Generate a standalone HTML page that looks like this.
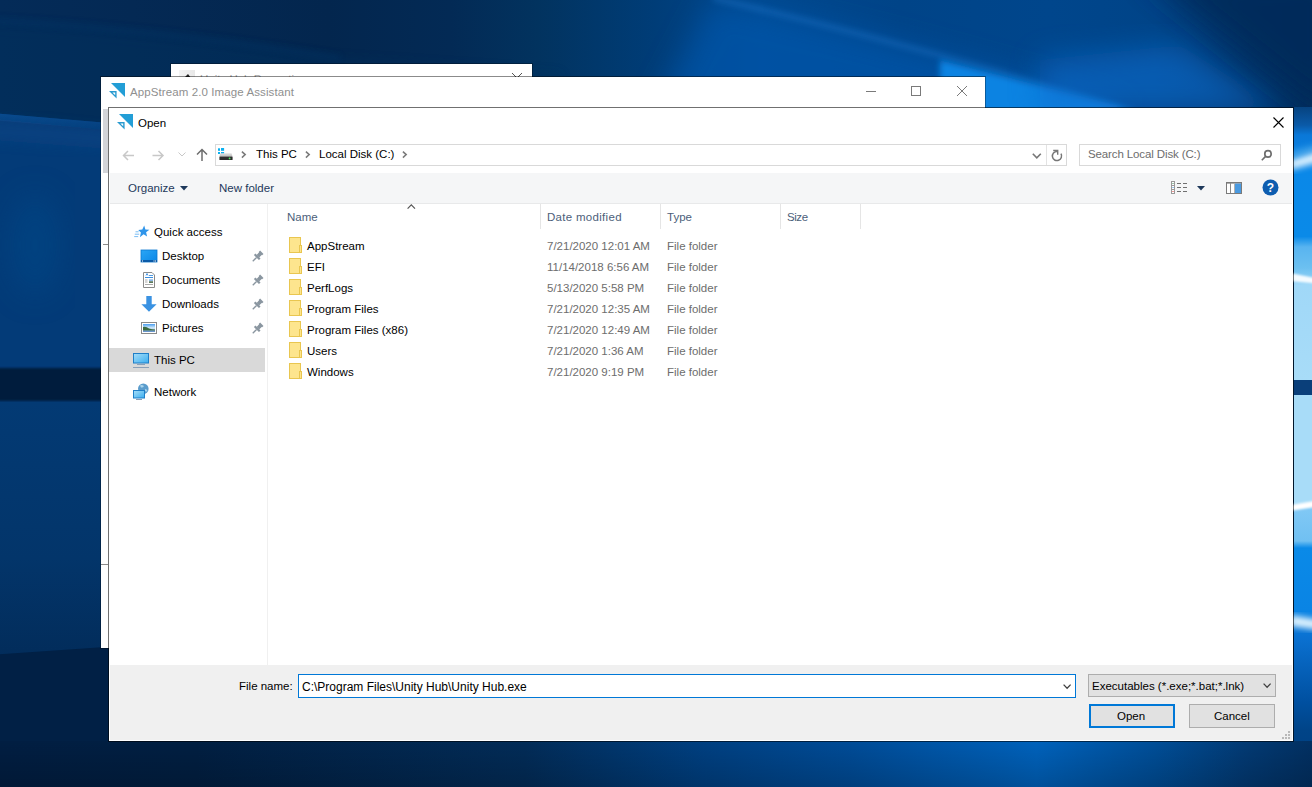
<!DOCTYPE html>
<html><head><meta charset="utf-8">
<style>
*{box-sizing:border-box;margin:0;padding:0}
html,body{width:1312px;height:787px;overflow:hidden}
body{position:relative;font-family:"Liberation Sans",sans-serif;font-size:11.5px;color:#000;background:#03306a}
.a{position:absolute}
#bg{position:absolute;left:0;top:0;width:1312px;height:787px;overflow:hidden}
#bg div{position:absolute}
.t{position:absolute;white-space:pre;line-height:14px;height:14px;margin-top:-1px}
svg{position:absolute;overflow:visible}
</style></head><body>
<div id="bg">
<svg width="1312" height="787" viewBox="0 0 1312 787" style="left:0;top:0">
  <defs>
    <filter id="b6" x="-20%" y="-20%" width="140%" height="140%"><feGaussianBlur stdDeviation="6"/></filter>
    <filter id="b3" x="-20%" y="-20%" width="140%" height="140%"><feGaussianBlur stdDeviation="3"/></filter>
    <filter id="b15" x="-30%" y="-30%" width="160%" height="160%"><feGaussianBlur stdDeviation="15"/></filter>
    <filter id="b1" x="-20%" y="-20%" width="140%" height="140%"><feGaussianBlur stdDeviation="1.2"/></filter>
    <linearGradient id="gTop" x1="0" y1="0" x2="1312" y2="0" gradientUnits="userSpaceOnUse">
      <stop offset="0" stop-color="#042b58"/>
      <stop offset="0.1" stop-color="#042954"/>
      <stop offset="0.25" stop-color="#03264e"/>
      <stop offset="0.343" stop-color="#032a55"/>
      <stop offset="0.41" stop-color="#02335f"/>
      <stop offset="0.5" stop-color="#003d78"/>
      <stop offset="0.58" stop-color="#00488e"/>
      <stop offset="0.686" stop-color="#004488"/>
      <stop offset="0.8" stop-color="#00468c"/>
      <stop offset="0.88" stop-color="#004488"/>
      <stop offset="1" stop-color="#022d5c"/>
    </linearGradient>
    <linearGradient id="gBot" x1="0" y1="0" x2="1312" y2="0" gradientUnits="userSpaceOnUse">
      <stop offset="0" stop-color="#011e42"/>
      <stop offset="0.15" stop-color="#011f42"/>
      <stop offset="0.4" stop-color="#022c58"/>
      <stop offset="0.53" stop-color="#003f80"/>
      <stop offset="0.65" stop-color="#004c98"/>
      <stop offset="0.79" stop-color="#0062bc"/>
      <stop offset="0.88" stop-color="#004e98"/>
      <stop offset="0.95" stop-color="#023a74"/>
      <stop offset="1" stop-color="#023062"/>
    </linearGradient>
    <linearGradient id="gBotV" x1="0" y1="0" x2="0" y2="1">
      <stop offset="0" stop-color="#000" stop-opacity="0"/>
      <stop offset="1" stop-color="#000" stop-opacity="0.18"/>
    </linearGradient>
  <linearGradient id="gR" x1="0" y1="100" x2="0" y2="800" gradientUnits="userSpaceOnUse">
      <stop offset="0" stop-color="#053a70"/>
      <stop offset="0.036" stop-color="#0a5aa8"/>
      <stop offset="0.05" stop-color="#0a78d8"/>
      <stop offset="0.1" stop-color="#0a88e8"/>
      <stop offset="0.195" stop-color="#0a8ae8"/>
      <stop offset="0.21" stop-color="#58b4f0"/>
      <stop offset="0.24" stop-color="#6cc0f0"/>
      <stop offset="0.265" stop-color="#a0d8f8"/>
      <stop offset="0.4" stop-color="#a8dcf8"/>
      <stop offset="0.4" stop-color="#0a3f7a"/>
      <stop offset="0.4214" stop-color="#0a3f7a"/>
      <stop offset="0.4214" stop-color="#a8dcf8"/>
      <stop offset="0.575" stop-color="#a8dcf8"/>
      <stop offset="0.585" stop-color="#80c8f5"/>
      <stop offset="0.63" stop-color="#70c0f2"/>
      <stop offset="0.64" stop-color="#0a8ae8"/>
      <stop offset="0.73" stop-color="#0a84e4"/>
      <stop offset="0.77" stop-color="#0a70d0"/>
      <stop offset="0.86" stop-color="#0050a0"/>
      <stop offset="0.9" stop-color="#004488"/>
      <stop offset="1" stop-color="#003a78"/>
    </linearGradient>
  <linearGradient id="gCurve" x1="0" y1="0" x2="0" y2="1">
      <stop offset="0" stop-color="#0b4c90"/>
      <stop offset="1" stop-color="#053d7a"/>
    </linearGradient>
  <linearGradient id="gL2" x1="0" y1="402" x2="0" y2="662" gradientUnits="userSpaceOnUse">
      <stop offset="0" stop-color="#033a74"/>
      <stop offset="0.6" stop-color="#03356a"/>
      <stop offset="1" stop-color="#022c5a"/>
    </linearGradient>
  </defs>
  <rect x="0" y="0" width="1312" height="787" fill="url(#gTop)"/>
  <!-- top-left subtle lighter region below curve -->
  <path d="M-20 22 Q150 30 340 60 L560 75 L560 140 L-20 140Z" fill="#04305e" opacity="0.45" filter="url(#b6)"/>
  <path d="M-20 20 Q150 28 340 58" fill="none" stroke="#0a3a70" stroke-width="3" opacity="0.5" filter="url(#b3)"/>
  <!-- beam: bright region below diagonal -->
  <path d="M713 0 Q900 40 1120 107 L1120 140 L640 140 Z" fill="#0056ac" opacity="0.7" filter="url(#b15)"/>
  <path d="M713 -2 Q850 30 1000 72 L1120 108" fill="none" stroke="#2a84dc" stroke-width="4" opacity="0.45" filter="url(#b3)"/>
  <path d="M940 60 L1135 110 L940 120Z" fill="#0a86e6" opacity="0.95" filter="url(#b3)"/>
  <path d="M1040 60 L1180 45 L1285 112 L1040 112Z" fill="#0a6ccc" opacity="0.6" filter="url(#b15)"/>
  <!-- top right dark corner -->
  <path d="M1140 -30 L1340 -30 L1340 112 L1320 112 Z" fill="#022c5a" opacity="0.9" filter="url(#b15)"/>

  <!-- left strip -->
  <path d="M-10 113 L120 124 L120 800 L-10 800Z" fill="#033a76"/>
  <path d="M-10 113 L120 124 L120 131 L-10 120Z" fill="url(#gCurve)"/>
  <rect x="-10" y="131" width="130" height="236" fill="#033b78"/>
  <path d="M-10 118 L120 131 L120 150 L-10 140Z" fill="#084484" opacity="0.6" filter="url(#b6)"/>
  <ellipse cx="35" cy="245" rx="25" ry="50" fill="#044686" opacity="0.6" filter="url(#b15)"/>
  <rect x="-10" y="368" width="130" height="33" fill="#021c3e" filter="url(#b1)"/>
  <rect x="-10" y="402" width="130" height="260" fill="url(#gL2)"/>
  <path d="M-10 655 L120 646 L120 800 L-10 800Z" fill="#012045"/>
  

  <!-- right strip -->
  <rect x="1294" y="107" width="30" height="700" fill="url(#gR)"/>
  <path d="M1290 160 L1320 150 L1320 162 L1290 170Z" fill="#d8f0ff" filter="url(#b3)"/>
  <path d="M1290 152 L1320 144 L1320 150 L1290 158Z" fill="#60b8f0" opacity="0.6" filter="url(#b3)"/>
  <path d="M1290 273 L1320 279 L1320 284 L1290 281Z" fill="#f4fbff" filter="url(#b1)"/>
  <path d="M1290 505 L1320 500 L1320 506 L1290 511Z" fill="#ffffff" filter="url(#b1)"/>
  <path d="M1290 615 L1320 620 L1320 630 L1290 626Z" fill="#e0f4ff" filter="url(#b3)"/>

  <!-- bottom band -->
  <rect x="0" y="741" width="1312" height="60" fill="url(#gBot)"/>
  <rect x="0" y="741" width="1312" height="46" fill="url(#gBotV)"/>
</svg>
</div>

<!-- Unity Hub Properties window behind -->
<div class="a" style="left:170px;top:63px;width:363px;height:14px;background:#fff;background-clip:padding-box;border:1px solid rgba(0,0,0,0.3);border-bottom:0;overflow:hidden">
  <div class="a" style="left:8px;top:6px;width:16px;height:7px;background:linear-gradient(90deg,#f4f4f4,#e8e8e8)"></div>
  <svg style="left:12px;top:9px" width="10" height="5"><path d="M1 5 L5 1 L8 5Z" fill="#222"/></svg>
  <div class="t" style="left:29px;top:9px;color:#a8a8a8;font-size:11.5px">Unity Hub Properties</div>
  <svg style="left:340px;top:8px" width="12" height="12"><path d="M1 1L11 11M11 1L1 11" stroke="#555" stroke-width="1"/></svg>
</div>

<!-- AppStream window -->
<div class="a" style="left:100px;top:76px;width:886px;height:573px;background:#fff;background-clip:padding-box;border:1px solid rgba(0,0,0,0.3);border-top-color:rgba(0,0,0,0.45)">
  <svg style="left:7px;top:5px" width="18" height="17" viewBox="0 0 18 17">
    <path d="M3 1H17V15Z" fill="#239ed6"/>
    <path d="M1 9H8.6V16.5Z M4.4 10.4H7.2V13.2Z" fill="#2a9bd0" fill-rule="evenodd"/>
  </svg>
  <div class="t" style="left:29px;top:9px;color:#8f8f8f;font-size:11.5px;letter-spacing:0.1px">AppStream 2.0 Image Assistant</div>
  <div class="a" style="left:765px;top:14px;width:10px;height:1px;background:#7a7a7a"></div>
  <div class="a" style="left:810px;top:9px;width:10px;height:10px;border:1px solid #7a7a7a"></div>
  <svg style="left:856px;top:9px" width="10" height="10"><path d="M0 0L10 10M10 0L0 10" stroke="#7a7a7a" stroke-width="1"/></svg>
  <div class="a" style="left:2px;top:32px;width:5px;height:64px;background:#d3d4d8"></div>
  <div class="a" style="left:2px;top:167px;width:5px;height:1px;background:#8a8a8a"></div>
  <div class="a" style="left:0px;top:487px;width:7px;height:1px;background:#8a8a8a"></div>
</div>

<!-- Open dialog -->
<div class="a" id="dlg" style="left:108px;top:107px;width:1186px;height:635px;background:#fff;background-clip:padding-box;border:1px solid rgba(0,0,0,0.56)">
  <!-- title -->
  <svg style="left:7px;top:5px" width="18" height="17" viewBox="0 0 18 17">
    <path d="M3 1H17V15Z" fill="#239ed6"/>
    <path d="M1 9H8.6V16.5Z M4.4 10.4H7.2V13.2Z" fill="#2a9bd0" fill-rule="evenodd"/>
  </svg>
  <div class="t" style="left:29px;top:9px">Open</div>
  <svg style="left:1164px;top:9px" width="11" height="11"><path d="M0.5 0.5L10.5 10.5M10.5 0.5L0.5 10.5" stroke="#000" stroke-width="1.1"/></svg>

  <!-- nav row -->
  <svg style="left:13px;top:42px" width="13" height="11" viewBox="0 0 13 11"><path d="M12 5.5H1.5M6 1L1.5 5.5L6 10" fill="none" stroke="#c8c8c8" stroke-width="1.5"/></svg>
  <svg style="left:43px;top:42px" width="13" height="11" viewBox="0 0 13 11"><path d="M0.5 5.5H11M6.5 1L11 5.5L6.5 10" fill="none" stroke="#c8c8c8" stroke-width="1.5"/></svg>
  <svg style="left:69px;top:44px" width="8" height="5" viewBox="0 0 8 5"><path d="M0.5 0.5L4 4L7.5 0.5" fill="none" stroke="#c8c8c8" stroke-width="1"/></svg>
  <svg style="left:87px;top:40px" width="12" height="13" viewBox="0 0 12 13"><path d="M6 13V1.5M1 6.5L6 1.5L11 6.5" fill="none" stroke="#6d6d6d" stroke-width="1.5"/></svg>

  <div class="a" style="left:106px;top:36px;width:852px;height:22px;border:1px solid #d9d9d9"></div>
  <div class="a" style="left:937px;top:37px;width:1px;height:20px;background:#e3e3e3"></div>
  <!-- drive icon -->
  <svg style="left:109px;top:40px" width="16" height="14" viewBox="0 0 16 14">
    <defs><linearGradient id="gDrv" x1="0" y1="0" x2="0" y2="1"><stop offset="0" stop-color="#e4e4e4"/><stop offset="1" stop-color="#bcbcbc"/></linearGradient></defs>
    <rect x="0" y="0.3" width="2" height="2.5" fill="#0ab0f0"/><rect x="3" y="0" width="3.1" height="2.8" fill="#0ab0f0"/>
    <rect x="0" y="4" width="2" height="2" fill="#0ab0f0"/><rect x="3" y="4" width="3.1" height="2.7" fill="#0ab0f0"/>
    <path d="M2.2 5.2H13.6L14.5 8.6H1.4Z" fill="url(#gDrv)"/>
    <rect x="1.4" y="8.5" width="13.2" height="3.6" rx="0.6" fill="#2e2e2e"/>
    <circle cx="11.6" cy="10.4" r="0.9" fill="#4cf060"/>
  </svg>
  <svg style="left:132px;top:43px" width="6" height="8" viewBox="0 0 6 8"><path d="M0.9 0.6L4.2 3.6L0.9 6.6" fill="none" stroke="#7a7a7a" stroke-width="1.5"/></svg>
  <div class="t" style="left:147px;top:40px">This PC</div>
  <svg style="left:196px;top:43px" width="6" height="8" viewBox="0 0 6 8"><path d="M0.9 0.6L4.2 3.6L0.9 6.6" fill="none" stroke="#7a7a7a" stroke-width="1.5"/></svg>
  <div class="t" style="left:210px;top:40px">Local Disk (C:)</div>
  <svg style="left:293px;top:43px" width="6" height="8" viewBox="0 0 6 8"><path d="M0.9 0.6L4.2 3.6L0.9 6.6" fill="none" stroke="#7a7a7a" stroke-width="1.5"/></svg>
  <svg style="left:923px;top:45px" width="10" height="7" viewBox="0 0 10 7"><path d="M0.8 0.8L4.8 4.8L8.8 0.8" fill="none" stroke="#777" stroke-width="1.6"/></svg>
  <svg style="left:941px;top:41px" width="14" height="14" viewBox="0 0 14 14"><path d="M7 2.4A4.6 4.6 0 1 0 10.98 4.7" fill="none" stroke="#777" stroke-width="1.5"/><path d="M3.2 1.5H7.7V5.7" fill="none" stroke="#777" stroke-width="1.4"/></svg>

  <div class="a" style="left:970px;top:36px;width:202px;height:22px;border:1px solid #d9d9d9"></div>
  <div class="t" style="left:979px;top:40px;color:#6d6d6d;letter-spacing:-0.12px">Search Local Disk (C:)</div>
  <svg style="left:1152px;top:41px" width="13" height="13" viewBox="0 0 13 13"><circle cx="7" cy="4.9" r="3.2" fill="none" stroke="#6e6e6e" stroke-width="1.7"/><path d="M4.6 7.4L0.8 11.3" stroke="#6e6e6e" stroke-width="1.6"/></svg>

  <!-- toolbar -->
  <div class="a" style="left:1px;top:65px;width:1182px;height:31px;background:#f5f6f7;border-bottom:1px solid #e8e9ea"></div>
  <div class="t" style="left:19px;top:73.5px;color:#1e395b">Organize</div>
  <svg style="left:71px;top:78px" width="9" height="5" viewBox="0 0 9 5"><path d="M0 0H8L4 4.5Z" fill="#1e395b"/></svg>
  <div class="t" style="left:110px;top:73.5px;color:#1e395b">New folder</div>
  <svg style="left:1062px;top:73px" width="17" height="13" viewBox="0 0 17 13">
    <rect x="0.5" y="0.5" width="3" height="12" fill="#fff" stroke="#9a9a9a" stroke-width="1"/>
    <path d="M0.5 4.5H3.5M0.5 8.5H3.5" stroke="#9a9a9a" stroke-width="1"/>
    <rect x="1.5" y="2" width="1" height="1" fill="#3a8a5a"/><rect x="1.5" y="6" width="1" height="1" fill="#3a8ae0"/><rect x="1.5" y="10" width="1" height="1" fill="#e03030"/>
    <path d="M6 2.5H10M12 2.5H16M6 6.5H10M12 6.5H16M6 10.5H10M12 10.5H16" stroke="#707070" stroke-width="1"/>
  </svg>
  <svg style="left:1088px;top:78px" width="9" height="5" viewBox="0 0 9 5"><path d="M0 0H8L4 4.5Z" fill="#1e395b"/></svg>
  <svg style="left:1117px;top:74px" width="16" height="12" viewBox="0 0 16 12">
    <rect x="0.5" y="0.5" width="15" height="11" fill="#fff" stroke="#7a7a7a" stroke-width="1"/>
    <rect x="0" y="0" width="16" height="1.6" fill="#7a7a7a"/>
    <path d="M4.5 1V11" stroke="#8a8a8a" stroke-width="1"/>
    <rect x="9" y="1.6" width="6" height="9.4" fill="#4a9ae0"/>
    <path d="M8.5 1V11" stroke="#b0b0b0" stroke-width="1"/>
  </svg>
  <svg style="left:1153px;top:71px" width="17" height="17" viewBox="0 0 17 17">
    <circle cx="8.5" cy="8.5" r="8" fill="#0e5db0"/>
    <text x="8.5" y="13" font-family="Liberation Sans" font-weight="bold" font-size="12" fill="#fff" text-anchor="middle">?</text>
  </svg>

  <!-- nav pane -->
  <div class="a" style="left:158px;top:96px;width:1px;height:461px;background:#f0f0f0"></div>
  <svg style="left:25px;top:117px" width="16" height="14" viewBox="0 0 16 14">
    <path d="M10.2 0.6L11.4 4.6L15.4 4.7L12.1 7.2L13.1 11.6L9.6 9.2L5.9 12.2L6.9 7.6L4.2 4.9L8.3 4.6Z" fill="#2f95ea"/>
    <path d="M1.5 6.8H4.6M0.8 9.2H5.2M0.2 11.6H4.2" stroke="#6ab6f2" stroke-width="0.9"/>
  </svg>
  <div class="t" style="left:45px;top:118px">Quick access</div>
  <svg style="left:32px;top:142px" width="16" height="12" viewBox="0 0 16 12">
    <defs><linearGradient id="gDesk" x1="0" y1="0" x2="1" y2="1"><stop offset="0" stop-color="#2aa6f6"/><stop offset="1" stop-color="#0a86e6"/></linearGradient></defs>
    <rect x="0" y="0" width="16" height="12" fill="url(#gDesk)"/>
    <rect x="0" y="0" width="16" height="12" fill="none" stroke="#0a78d0" stroke-width="0.8"/>
    <rect x="0" y="10" width="16" height="2" fill="#0a5aa8"/>
    <rect x="1" y="10.5" width="1" height="1" fill="#fff"/><rect x="12.5" y="10.5" width="1" height="1" fill="#fff"/><rect x="14" y="10.5" width="1" height="1" fill="#fff"/>
  </svg>
  <div class="t" style="left:53px;top:142px">Desktop</div>
  <svg style="left:34px;top:164px" width="13" height="16" viewBox="0 0 13 16">
    <path d="M0.5 0.5H9L11.5 3V15.5H0.5Z" fill="#fff" stroke="#8a8a8a" stroke-width="1"/>
    <path d="M3 3.5L4 1.5L5 3.5M6 3.5H10" stroke="#3a8ee0" stroke-width="0.9" fill="none"/>
    <path d="M2 5.5H10" stroke="#3a8ee0" stroke-width="1"/>
    <path d="M2 8H4.5M2 10H4.5M2 12.5H10" stroke="#a0a0a0" stroke-width="0.9"/>
    <rect x="6" y="7.5" width="4" height="1.2" fill="#5a9ae0"/>
    <rect x="6" y="9.3" width="4" height="1.6" fill="#4a6a4a"/>
  </svg>
  <div class="t" style="left:53px;top:166px">Documents</div>
  <svg style="left:32px;top:188px" width="16" height="16" viewBox="0 0 16 16">
    <path d="M5.3 0H10.7V8.2H15.6L8 15.8L0.4 8.2H5.3Z" fill="#3a92e2"/>
  </svg>
  <div class="t" style="left:53px;top:190px">Downloads</div>
  <svg style="left:32px;top:214px" width="16" height="12" viewBox="0 0 16 12">
    <defs><linearGradient id="gSky" x1="0" y1="0" x2="0" y2="1"><stop offset="0" stop-color="#4a9ef0"/><stop offset="0.5" stop-color="#d8ecf8"/><stop offset="1" stop-color="#5a8ac8"/></linearGradient></defs>
    <rect x="0.5" y="0.5" width="15" height="11" fill="#fff" stroke="#8a8a8a" stroke-width="1"/>
    <rect x="2" y="2" width="12" height="8" fill="url(#gSky)"/>
    <path d="M2 5Q5 4 8 6.5Q11 7.5 14 7.5V8.5H2Z" fill="#3a6a40"/>
  </svg>
  <div class="t" style="left:53px;top:214px">Pictures</div>
  <svg style="left:142px;top:143px" width="12" height="12" viewBox="0 0 12 12"><g transform="rotate(45 6 6)" fill="#8a96a0"><path d="M3.6 -0.8H8.4V1.2L7.8 1.2V4.8H4.2V1.2H3.6Z"/><rect x="2.4" y="4.6" width="7.2" height="2.2"/><rect x="5.35" y="6.6" width="1.3" height="5.4"/></g></svg>
  <svg style="left:142px;top:167px" width="12" height="12" viewBox="0 0 12 12"><g transform="rotate(45 6 6)" fill="#8a96a0"><path d="M3.6 -0.8H8.4V1.2L7.8 1.2V4.8H4.2V1.2H3.6Z"/><rect x="2.4" y="4.6" width="7.2" height="2.2"/><rect x="5.35" y="6.6" width="1.3" height="5.4"/></g></svg>
  <svg style="left:142px;top:191px" width="12" height="12" viewBox="0 0 12 12"><g transform="rotate(45 6 6)" fill="#8a96a0"><path d="M3.6 -0.8H8.4V1.2L7.8 1.2V4.8H4.2V1.2H3.6Z"/><rect x="2.4" y="4.6" width="7.2" height="2.2"/><rect x="5.35" y="6.6" width="1.3" height="5.4"/></g></svg>
  <svg style="left:142px;top:215px" width="12" height="12" viewBox="0 0 12 12"><g transform="rotate(45 6 6)" fill="#8a96a0"><path d="M3.6 -0.8H8.4V1.2L7.8 1.2V4.8H4.2V1.2H3.6Z"/><rect x="2.4" y="4.6" width="7.2" height="2.2"/><rect x="5.35" y="6.6" width="1.3" height="5.4"/></g></svg>

  <div class="a" style="left:0px;top:240px;width:156px;height:24px;background:#d9d9d9"></div>
  <svg style="left:24px;top:245px" width="16" height="15" viewBox="0 0 16 15">
    <defs><linearGradient id="gScr" x1="0" y1="0" x2="1" y2="1"><stop offset="0" stop-color="#a8def8"/><stop offset="1" stop-color="#3aaef0"/></linearGradient></defs>
    <rect x="0.5" y="0.5" width="15" height="9.5" fill="url(#gScr)" stroke="#1f7fc8" stroke-width="1"/>
    <path d="M4 11.5H12" stroke="#8aa0b8" stroke-width="1"/>
    <path d="M0 14.5H16" stroke="#8aa0b8" stroke-width="1"/>
  </svg>
  <div class="t" style="left:45px;top:246px">This PC</div>
  <svg style="left:24px;top:275px" width="17" height="17" viewBox="0 0 17 17">
    <circle cx="10.3" cy="5.8" r="5.3" fill="#5a9ccc"/>
    <path d="M7 2.5Q9 1.5 11 3Q10 5 8 4.5Z M12 6Q14 6 14.5 8Q13 9 12 8Z" fill="#a8d4ec"/>
    <rect x="0.5" y="7.5" width="11" height="7.5" fill="url(#gScr)" stroke="#1f7fc8" stroke-width="1"/>
    <path d="M3 16.5H9" stroke="#8aa0b8" stroke-width="1"/>
  </svg>
  <div class="t" style="left:45px;top:278px">Network</div>

  <!-- column headers -->
  <div class="t" style="left:178px;top:103px;color:#4c607a">Name</div>
  <svg style="left:298px;top:96px" width="9" height="6" viewBox="0 0 9 6"><path d="M0.6 4.6L4.3 0.9L8 4.6" fill="none" stroke="#555" stroke-width="1.2"/></svg>
  <div class="a" style="left:431px;top:96px;width:1px;height:25px;background:#e5e5e5"></div>
  <div class="t" style="left:438px;top:103px;color:#4c607a;letter-spacing:0.3px">Date modified</div>
  <div class="a" style="left:551px;top:96px;width:1px;height:25px;background:#e5e5e5"></div>
  <div class="t" style="left:558px;top:103px;color:#4c607a">Type</div>
  <div class="a" style="left:671px;top:96px;width:1px;height:25px;background:#e5e5e5"></div>
  <div class="t" style="left:678px;top:103px;color:#4c607a;letter-spacing:-0.45px">Size</div>
  <div class="a" style="left:751px;top:96px;width:1px;height:25px;background:#e5e5e5"></div>

  <!-- rows -->
    <svg style="left:180px;top:129px" width="14" height="17" viewBox="0 0 14 17"><rect x="0.5" y="0.5" width="11" height="15" fill="#fde58e" stroke="#e9c650" stroke-width="1"/><rect x="10.5" y="8.5" width="2" height="7" fill="#fde58e" stroke="#e9c650" stroke-width="1"/></svg>
  <div class="t" style="left:198px;top:132px">AppStream</div>
  <div class="t" style="left:438px;top:132px;color:#6d6d6d">7/21/2020 12:01 AM</div>
  <div class="t" style="left:558px;top:132px;color:#6d6d6d">File folder</div>
  <svg style="left:180px;top:150px" width="14" height="17" viewBox="0 0 14 17"><rect x="0.5" y="0.5" width="11" height="15" fill="#fde58e" stroke="#e9c650" stroke-width="1"/><rect x="10.5" y="8.5" width="2" height="7" fill="#fde58e" stroke="#e9c650" stroke-width="1"/></svg>
  <div class="t" style="left:198px;top:153px">EFI</div>
  <div class="t" style="left:438px;top:153px;color:#6d6d6d">11/14/2018 6:56 AM</div>
  <div class="t" style="left:558px;top:153px;color:#6d6d6d">File folder</div>
  <svg style="left:180px;top:171px" width="14" height="17" viewBox="0 0 14 17"><rect x="0.5" y="0.5" width="11" height="15" fill="#fde58e" stroke="#e9c650" stroke-width="1"/><rect x="10.5" y="8.5" width="2" height="7" fill="#fde58e" stroke="#e9c650" stroke-width="1"/></svg>
  <div class="t" style="left:198px;top:174px">PerfLogs</div>
  <div class="t" style="left:438px;top:174px;color:#6d6d6d">5/13/2020 5:58 PM</div>
  <div class="t" style="left:558px;top:174px;color:#6d6d6d">File folder</div>
  <svg style="left:180px;top:192px" width="14" height="17" viewBox="0 0 14 17"><rect x="0.5" y="0.5" width="11" height="15" fill="#fde58e" stroke="#e9c650" stroke-width="1"/><rect x="10.5" y="8.5" width="2" height="7" fill="#fde58e" stroke="#e9c650" stroke-width="1"/></svg>
  <div class="t" style="left:198px;top:195px">Program Files</div>
  <div class="t" style="left:438px;top:195px;color:#6d6d6d">7/21/2020 12:35 AM</div>
  <div class="t" style="left:558px;top:195px;color:#6d6d6d">File folder</div>
  <svg style="left:180px;top:213px" width="14" height="17" viewBox="0 0 14 17"><rect x="0.5" y="0.5" width="11" height="15" fill="#fde58e" stroke="#e9c650" stroke-width="1"/><rect x="10.5" y="8.5" width="2" height="7" fill="#fde58e" stroke="#e9c650" stroke-width="1"/></svg>
  <div class="t" style="left:198px;top:216px">Program Files (x86)</div>
  <div class="t" style="left:438px;top:216px;color:#6d6d6d">7/21/2020 12:49 AM</div>
  <div class="t" style="left:558px;top:216px;color:#6d6d6d">File folder</div>
  <svg style="left:180px;top:234px" width="14" height="17" viewBox="0 0 14 17"><rect x="0.5" y="0.5" width="11" height="15" fill="#fde58e" stroke="#e9c650" stroke-width="1"/><rect x="10.5" y="8.5" width="2" height="7" fill="#fde58e" stroke="#e9c650" stroke-width="1"/></svg>
  <div class="t" style="left:198px;top:237px">Users</div>
  <div class="t" style="left:438px;top:237px;color:#6d6d6d">7/21/2020 1:36 AM</div>
  <div class="t" style="left:558px;top:237px;color:#6d6d6d">File folder</div>
  <svg style="left:180px;top:255px" width="14" height="17" viewBox="0 0 14 17"><rect x="0.5" y="0.5" width="11" height="15" fill="#fde58e" stroke="#e9c650" stroke-width="1"/><rect x="10.5" y="8.5" width="2" height="7" fill="#fde58e" stroke="#e9c650" stroke-width="1"/></svg>
  <div class="t" style="left:198px;top:258px">Windows</div>
  <div class="t" style="left:438px;top:258px;color:#6d6d6d">7/21/2020 9:19 PM</div>
  <div class="t" style="left:558px;top:258px;color:#6d6d6d">File folder</div>


  <!-- bottom panel -->
  <div class="a" style="left:1px;top:557px;width:1182px;height:75px;background:#f0f0f0"></div>
  <div class="t" style="left:130px;top:572px">File name:</div>
  <div class="a" style="left:189px;top:566px;width:778px;height:24px;border:1px solid #0078d7;background:#fff"></div>
  <div class="t" style="left:193px;top:573px;font-size:12px">C:\Program Files\Unity Hub\Unity Hub.exe</div>
  <svg style="left:954px;top:576px" width="9" height="6" viewBox="0 0 9 6"><path d="M0.6 0.6L4.1 4.3L7.6 0.6" fill="none" stroke="#404040" stroke-width="1.25"/></svg>
  <div class="a" style="left:979px;top:566px;width:188px;height:23px;border:1px solid #adadad;background:#e1e1e1"></div>
  <div class="t" style="left:983px;top:572px">Executables (*.exe;*.bat;*.lnk)</div>
  <svg style="left:1154px;top:575px" width="9" height="6" viewBox="0 0 9 6"><path d="M0.6 0.6L4.1 4.3L7.6 0.6" fill="none" stroke="#404040" stroke-width="1.25"/></svg>
  <div class="a" style="left:980px;top:596px;width:86px;height:24px;border:2px solid #0078d7;background:#e1e1e1"></div>
  <div class="t" style="left:1008px;top:602px">Open</div>
  <div class="a" style="left:1080px;top:596px;width:86px;height:24px;border:1px solid #adadad;background:#e1e1e1"></div>
  <div class="t" style="left:1105px;top:602px">Cancel</div>
  <svg style="left:1173px;top:623px" width="9" height="9" viewBox="0 0 9 9"><g fill="#b8b8b8"><rect x="6" y="0" width="2" height="2"/><rect x="3" y="3" width="2" height="2"/><rect x="6" y="3" width="2" height="2"/><rect x="0" y="6" width="2" height="2"/><rect x="3" y="6" width="2" height="2"/><rect x="6" y="6" width="2" height="2"/></g></svg>
</div>
</body></html>
